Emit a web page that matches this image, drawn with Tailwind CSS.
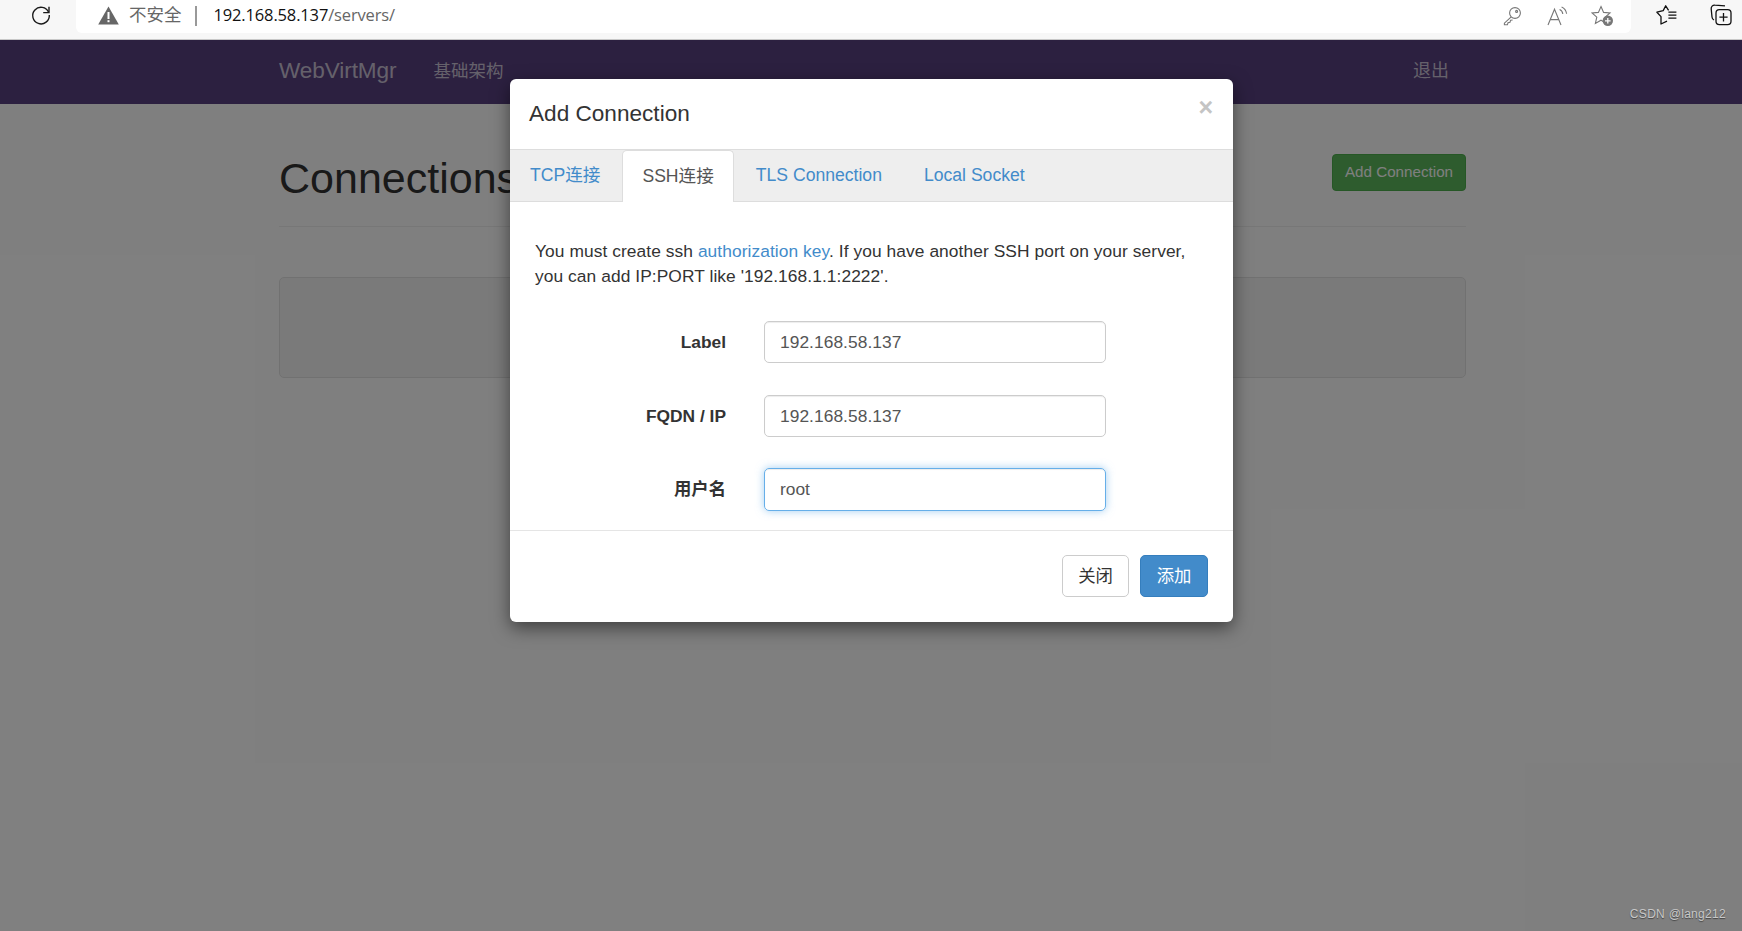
<!DOCTYPE html>
<html lang="zh-CN">
<head>
  <meta charset="UTF-8">
  <title>Connections - WebVirtMgr</title>
  <script src="https://cdn.jsdelivr.net/npm/@tailwindcss/browser@4"></script>
</head>
<body class="bg-white overflow-hidden h-[931px] font-['Liberation_Sans','Noto_Sans_CJK_SC',sans-serif] text-[#333]">
  <!-- Browser toolbar -->
  <div class="h-[40px] bg-[#f7f7f7] border-b border-[#c8c8c8] flex relative">
    <div class="w-[76px] flex justify-end pr-[24px] pt-[4px]">
      <svg class="w-[22px] h-[22px]" viewBox="0 0 22 22" fill="none" stroke="#1a1a1a" stroke-width="1.4"><path d="M18.6 8.2A8.3 8.3 0 1 0 19.3 11"/><path d="M19 2.8v5.8h-5.8"/></svg>
    </div>
    <div class="w-[1555px] h-[33px] bg-white rounded-b-[6px] flex items-center pb-[2px]">
      <svg class="ml-[22px] w-[21px] h-[19px]" viewBox="0 0 21 19"><path d="M10.5 0.5 20.8 18.6H0.2Z" fill="#666"/><rect x="9.5" y="6" width="2" height="7" fill="#fff"/><rect x="9.5" y="14.2" width="2" height="2" fill="#fff"/></svg>
      <span class="ml-[10px] text-[17.5px] text-[#666]">不安全</span>
      <span class="ml-[13px] w-[2px] h-[20px] bg-[#999]"></span>
      <span class="ml-[17px] text-[16.5px] font-['Open_Sans',sans-serif] tracking-[-0.15px] text-[#111]">192.168.58.137<span class="text-[#666]">/servers/</span></span>
      <div class="ml-auto flex items-center mr-[17px]">
        <svg class="w-[20px] h-[20px]" viewBox="0 0 20 20" fill="none" stroke="#777" stroke-width="1.1"><circle cx="13" cy="7" r="5.4"/><circle cx="14.6" cy="5.4" r="1"/><path d="M9.2 10.8 2.4 17.2v1.6h3l.6-2 2-.6.6-2 2-.2"/></svg>
        <svg class="ml-[25px] w-[21px] h-[20px]" viewBox="0 0 21 20" fill="none" stroke="#777" stroke-width="1.1"><path d="M1 19 7.5 3.2 14 19M3.2 13.6h8.6"/><path d="M12.6 3.6c1.8.8 3 2.4 3.2 4.4M14.6 1c2.8 1.2 4.6 3.8 5 6.8"/></svg>
        <svg class="ml-[23px] w-[23px] h-[22px]" viewBox="0 0 23 22"><path d="M10 1.5 12.6 7.4 19 8l-4.8 4.2 1.4 6.3L10 15.2 4.4 18.5l1.4-6.3L1 8l6.4-.6Z" fill="none" stroke="#777" stroke-width="1.1"/><circle cx="16.8" cy="15.8" r="5.2" fill="#777"/><path d="M16.8 13v5.6M14 15.8h5.6" stroke="#fff" stroke-width="1.3"/></svg>
      </div>
    </div>
    <div class="flex-1 relative">
      <svg class="absolute left-[25px] top-[5px] w-[22px] h-[21px]" viewBox="0 0 22 21" fill="none" stroke="#111" stroke-width="1.3"><path d="M12.6 5.4 9.7 .8 7.2 5.6 .9 7.2 5 11.6 5 19 11 16.2" stroke-linejoin="round"/><path d="M12.4 7.2h8M12.4 10.2h8M12.4 13.2h8"/></svg>
      <svg class="absolute left-[79px] top-[4px] w-[22px] h-[22px]" viewBox="0 0 22 22" fill="none" stroke="#111" stroke-width="1.3"><path d="M15 1.8 5 1.2C2.6 1 1 2.6 1.2 5l.8 8c.1 1.4.8 2.4 2 3"/><rect x="6" y="5.6" width="15" height="15" rx="3.4"/><path d="M13.5 9v8.4M9.4 13.2h8.2"/></svg>
    </div>
  </div>

  <div class="relative h-[891px] overflow-hidden">
    <!-- Page behind the dialog -->
    <nav class="h-[64px] bg-[#584080] flex items-center pl-[279px] pr-[293px] pb-[2px]">
      <span class="text-[22.6px] text-[#fff]/70 tracking-[-0.1px]">WebVirtMgr</span>
      <span class="ml-[37px] text-[17.5px] text-[#fff]/70">基础架构</span>
      <span class="ml-auto text-[18px] text-[#fff]/70">退出</span>
    </nav>
    <main class="ml-[279px] w-[1187px]">
      <div class="h-[123px] border-b border-[#eee] flex justify-between items-start">
        <h1 class="mt-[47px] text-[43px] leading-[54px]">Connections</h1>
        <button class="mt-[50px] w-[134px] h-[37px] rounded-[4px] bg-[#5cb85c] border border-[#4cae4c] text-white text-[15.2px]">Add Connection</button>
      </div>
      <div class="mt-[50px] h-[101px] rounded-[5px] bg-[#f5f5f5] border border-[#e3e3e3]"></div>
    </main>

    <!-- Backdrop -->
    <div class="absolute inset-0 bg-black/50"></div>

    <!-- Dialog -->
    <div class="absolute left-[510px] top-[39px] w-[723px] h-[543px] bg-white rounded-[6px] shadow-[0_6px_18px_rgba(0,0,0,0.5)] text-[17.36px]">
      <div class="h-[70px] relative flex items-center pl-[19px] pb-[1px]">
        <h3 class="text-[22.6px] text-[#333]">Add Connection</h3>
        <span class="absolute right-[20px] top-[13px] text-[25px] leading-[30px] font-bold text-[#c4c4c4]">×</span>
      </div>
      <ul class="h-[53px] bg-[#eee] border-y border-[#ddd] flex gap-[3px] items-end pl-[1px] text-[17.6px]">
        <li class="h-[51px] px-[19px] flex items-center text-[#428bca]">TCP连接</li>
        <li class="h-[52px] -mb-[1px] px-[19px] flex items-center bg-white border border-b-0 border-[#ddd] rounded-t-[5px] text-[#555]">SSH连接</li>
        <li class="h-[51px] px-[19px] flex items-center text-[#428bca]">TLS Connection</li>
        <li class="h-[51px] px-[19px] ml-[1px] flex items-center text-[#428bca]">Local Socket</li>
      </ul>
      <div class="h-[329px] pt-[37px] px-[25px] border-b border-[#e5e5e5]">
        <p class="leading-[25px] tracking-[0.07px]">You must create ssh <a class="text-[#428bca]">authorization key</a>. If you have another SSH port on your server, you can add IP:PORT like '192.168.1.1:2222'.</p>
        <div class="mt-[32px] flex flex-col">
          <div class="flex items-center h-[42px] mb-[32px]">
            <label class="w-[191px] text-right font-bold">Label</label>
            <input class="ml-[38px] w-[342px] h-[42px] px-[15px] border border-[#ccc] rounded-[5px] text-[#555] tracking-[0.05px] shadow-[inset_0_1px_1px_rgba(0,0,0,0.075)]" value="192.168.58.137">
          </div>
          <div class="flex items-center h-[42px] mb-[31px]">
            <label class="w-[191px] text-right font-bold">FQDN / IP</label>
            <input class="ml-[38px] w-[342px] h-[42px] px-[15px] border border-[#ccc] rounded-[5px] text-[#555] tracking-[0.05px] shadow-[inset_0_1px_1px_rgba(0,0,0,0.075)]" value="192.168.58.137">
          </div>
          <div class="flex items-center h-[43px]">
            <label class="w-[191px] text-right font-bold">用户名</label>
            <input class="ml-[38px] w-[342px] h-[43px] px-[15px] border border-[#66afe9] rounded-[5px] text-[#555] shadow-[inset_0_1px_1px_rgba(0,0,0,0.075),0_0_8px_rgba(102,175,233,0.6)]" value="root">
          </div>
        </div>
      </div>
      <div class="flex justify-end gap-[11px] pt-[24px] pr-[25px]">
        <button class="w-[67px] h-[42px] border border-[#ccc] rounded-[5px] bg-white text-[#333]">关闭</button>
        <button class="w-[68px] h-[42px] border border-[#357ebd] rounded-[5px] bg-[#428bca] text-white">添加</button>
      </div>
    </div>

    <!-- Watermark -->
    <span class="absolute right-[16px] bottom-[8px] text-[12px] tracking-[0.3px] text-[#c8c8c8] [text-shadow:0_1px_1px_#444]">CSDN @lang212</span>
  </div>
</body>
</html>
